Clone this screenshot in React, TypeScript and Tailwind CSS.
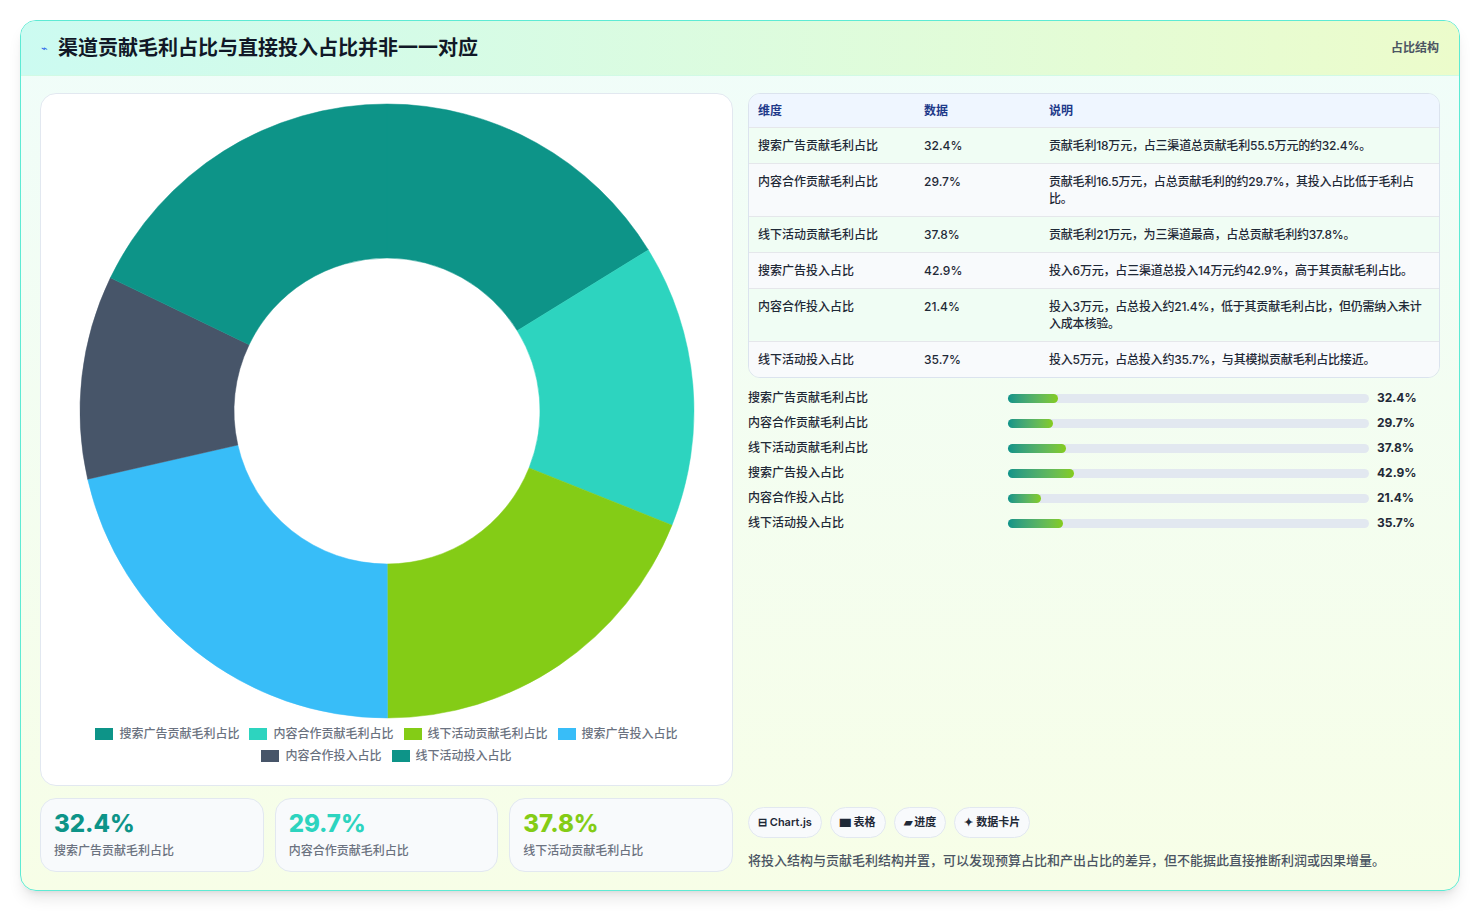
const rows = [
  { k: "搜索广告贡献毛利占比", v: 32.4, d: "贡献毛利18万元，占三渠道总贡献毛利55.5万元的约32.4%。", c: "#0d9488" },
  { k: "内容合作贡献毛利占比", v: 29.7, d: "贡献毛利16.5万元，占总贡献毛利的约29.7%，其投入占比低于毛利占比。", c: "#2dd4bf" },
  { k: "线下活动贡献毛利占比", v: 37.8, d: "贡献毛利21万元，为三渠道最高，占总贡献毛利约37.8%。", c: "#84cc16" },
  { k: "搜索广告投入占比", v: 42.9, d: "投入6万元，占三渠道总投入14万元约42.9%，高于其贡献毛利占比。", c: "#38bdf8" },
  { k: "内容合作投入占比", v: 21.4, d: "投入3万元，占总投入约21.4%，低于其贡献毛利占比，但仍需纳入未计入成本核验。", c: "#475569" },
  { k: "线下活动投入占比", v: 35.7, d: "投入5万元，占总投入约35.7%，与其模拟贡献毛利占比接近。", c: "#0d9488" },
];

function Donut() {
  const cx = 346, cy = 317, R = 307, r = 153;
  const total = rows.reduce((s, x) => s + x.v, 0);
  let a = -Math.PI / 2;
  const pt = (ang: number, rad: number) => [cx + rad * Math.cos(ang), cy + rad * Math.sin(ang)];
  return (
    <svg width="692" height="625" viewBox="0 0 692 625">
      {rows.map((s) => {
        const a0 = a;
        const a1 = a + (s.v / total) * Math.PI * 2;
        a = a1;
        const large = a1 - a0 > Math.PI ? 1 : 0;
        const [x0, y0] = pt(a0, R), [x1, y1] = pt(a1, R), [x2, y2] = pt(a1, r), [x3, y3] = pt(a0, r);
        return (
          <path
            key={s.k}
            d={`M${x0} ${y0} A${R} ${R} 0 ${large} 1 ${x1} ${y1} L${x2} ${y2} A${r} ${r} 0 ${large} 0 ${x3} ${y3}Z`}
            fill={s.c}
            stroke={s.c}
            strokeWidth="0.5"
          />
        );
      })}
    </svg>
  );
}

export default function App() {
  return (
    <div className="min-h-screen bg-white p-5" style={{ fontFamily: "Inter, 'Noto Sans CJK SC', sans-serif" }}>
      <div className="flex h-[871px] flex-col overflow-hidden rounded-2xl border border-[#5eead4] bg-gradient-to-b from-[#f0fdfa] to-[#f7fee7] shadow-lg">
        <div className="flex h-[55px] items-center justify-between border-b border-[#d1fae5] bg-gradient-to-r from-[#ccfbf1] to-[#ecfccb] px-5">
          <div className="flex items-center gap-2.5">
            <span className="text-[11px] text-[#2563eb]">⌁</span>
            <h1 className="text-[20px] font-bold text-[#111827]">渠道贡献毛利占比与直接投入占比并非一一对应</h1>
          </div>
          <span className="text-[12px] font-semibold text-[#4b5563]">占比结构</span>
        </div>
        <div className="flex flex-1 gap-[15px] px-[19px] pt-[17px] pb-[18px]">
          <div className="flex w-[693px] flex-col gap-3">
            <div className="flex h-[693px] flex-col items-center rounded-2xl border border-[#e2e8f0] bg-white">
              <Donut />
              <div className="mt-[6px] flex w-[600px] flex-wrap justify-center gap-x-2.5 gap-y-1 text-[12px] font-medium text-[#6b7280]">
                {rows.map((s) => (
                  <span key={s.k} className="flex items-center gap-1.5">
                    <span className="inline-block h-[12px] w-[18px]" style={{ background: s.c }} />
                    {s.k}
                  </span>
                ))}
              </div>
            </div>
            <div className="grid grid-cols-3 gap-[11px]">
              {rows.slice(0, 3).map((s) => (
                <div key={s.k} className="flex h-[74px] flex-col justify-center rounded-2xl border border-[#e2e8f0] bg-[#f8fafc] px-[13px]">
                  <div className="text-[24px] font-extrabold leading-7" style={{ color: s.c }}>{s.v}%</div>
                  <div className="mt-1 text-[12px] font-medium text-[#6b7280]">{s.k}</div>
                </div>
              ))}
            </div>
          </div>
          <div className="flex flex-1 flex-col">
            <div className="overflow-hidden rounded-xl border border-[#dbe3ee] text-[12px] font-medium text-[#1f2937]">
              <div className="flex h-[33px] items-center bg-[#eff6ff] px-[9px] font-semibold text-[#1e3a8a]">
                <span className="w-[166px]">维度</span>
                <span className="w-[125px]">数据</span>
                <span>说明</span>
              </div>
              {rows.map((s, i) => (
                <div key={s.k} className={`flex border-t border-[#e5e7eb] px-[9px] py-[9px] leading-[17px] ${i % 2 ? "bg-[#f8fafc]" : "bg-[#f0fdf4]"}`}>
                  <span className="w-[166px] shrink-0">{s.k}</span>
                  <span className="w-[125px] shrink-0">{s.v}%</span>
                  <span className="flex-1 tracking-[-0.2px]">{s.d}</span>
                </div>
              ))}
            </div>
            <div className="mt-[11px] flex flex-col gap-[7px]">
              {rows.map((s) => (
                <div key={s.k} className="flex h-[18px] items-center text-[12px] font-medium text-[#1f2937]">
                  <span className="w-[260px]">{s.k}</span>
                  <div className="h-[9px] w-[361px] rounded-full bg-[#e2e8f0]">
                    <div className="h-full rounded-full bg-gradient-to-r from-[#0d9488] to-[#84cc16]" style={{ width: `${s.v * 1.53}px` }} />
                  </div>
                  <span className="ml-2 font-bold">{s.v}%</span>
                </div>
              ))}
            </div>
            <div className="mt-auto flex gap-2 text-[11px] font-semibold text-[#1f2937]">
              {["⊟ Chart.js", "▆ 表格", "▰ 进度", "✦ 数据卡片"].map((t) => (
                <span key={t} className="rounded-full border border-[#e2e8f0] bg-[#f8fafc] px-[9px] py-[6px]">{t}</span>
              ))}
            </div>
            <p className="mt-[13px] mb-[2px] text-[13px] font-medium text-[#4b5563]">将投入结构与贡献毛利结构并置，可以发现预算占比和产出占比的差异，但不能据此直接推断利润或因果增量。</p>
          </div>
        </div>
      </div>
    </div>
  );
}
